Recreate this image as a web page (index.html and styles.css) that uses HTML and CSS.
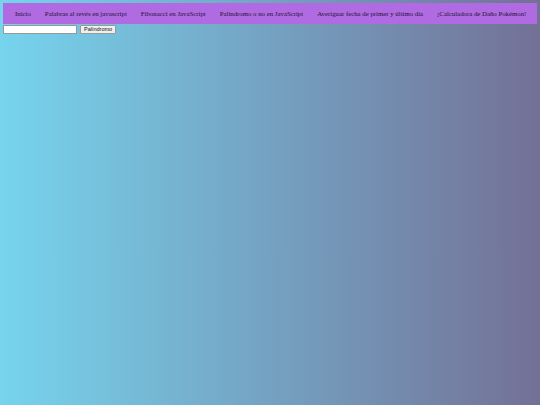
FILE: index.html
```html
<!DOCTYPE html>
<html lang="es">
<head>
<meta charset="utf-8">
<title>Inicio</title>
<link rel="stylesheet" href="styles.css">
</head>
<body>
<nav class="menu">
  <a class="menu-link" href="#">Inicio</a>
  <a class="menu-link" href="#">Palabras al revés en javascript</a>
  <a class="menu-link" href="#">Fibonacci en JavaScript</a>
  <a class="menu-link" href="#">Palíndromo o no en JavaScript</a>
  <a class="menu-link" href="#">Averiguar fecha de primer y último día</a>
  <a class="menu-link" href="#">¡Calculadora de Daño Pokémon!</a>
</nav>
<form class="form">
  <input class="field" type="text">
  <button class="btn" type="button">Palíndromo</button>
</form>
</body>
</html>
```
FILE: styles.css
```css
html, body {
  height: 100%;
}
body {
  margin: 0;
  padding: 3px;
  box-sizing: border-box;
  background: linear-gradient(to right, #76d4ed, #737096);
  font-family: "Liberation Serif", serif;
}
.menu {
  display: flex;
  align-items: center;
  justify-content: space-between;
  height: 21px;
  padding: 0 5px;
  background: #b06be2;
}
.menu-link {
  padding: 0 7px;
  font-size: 6.8px;
  color: #1c1430;
  text-decoration: none;
  white-space: nowrap;
}
.form {
  display: flex;
  align-items: center;
  gap: 3px;
  margin-top: 1px;
}
.field {
  width: 74px;
  height: 9px;
  box-sizing: border-box;
  border: 1px solid #999;
  padding: 0;
  background: #fff;
}
.btn {
  height: 9px;
  box-sizing: border-box;
  padding: 0 3px;
  font-family: "Liberation Sans", sans-serif;
  font-size: 5.5px;
  line-height: 1;
  color: #111;
  background: #efefef;
  border: 1px solid #999;
  border-radius: 1px;
}
```
